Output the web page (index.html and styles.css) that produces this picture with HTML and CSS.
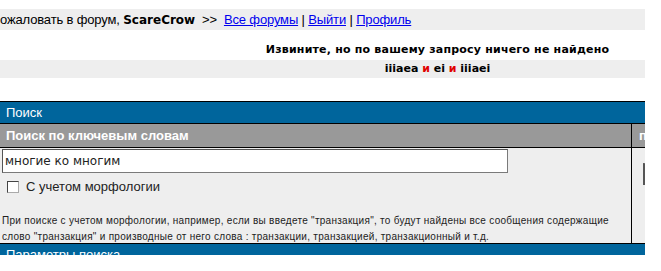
FILE: index.html
```html
<!doctype html>
<html lang="ru">
<head>
  <meta charset="utf-8">
  <title>Поиск</title>
  <link rel="stylesheet" href="styles.css">
</head>
<body>
  <div class="page">
    <div class="topbar">
      ожаловать в форум, <b class="user">ScareCrow</b>&nbsp; &gt;&gt;&nbsp; <a href="#">Все форумы</a> | <a href="#">Выйти</a> | <a href="#">Профиль</a>
    </div>
    <div class="notice">Извините, но по вашему запросу ничего не найдено</div>
    <div class="query">iiiaea <span class="op">и</span> ei <span class="op">и</span> iiiaei</div>

    <div class="search">
      <div class="search-title">Поиск</div>
      <div class="search-grid">
        <div class="cell-head">Поиск по ключевым словам</div>
        <div class="cell-head cell-side">п</div>
        <div class="cell-body">
          <input class="keywords" type="text" value="многие ко многим">
          <label class="morph"><input class="check" type="checkbox"> С учетом морфологии</label>
          <p class="hint">При поиске с учетом морфологии, например, если вы введете "транзакция", то будут найдены все сообщения содержащие<br>слово "транзакция" и производные от него слова : транзакции, транзакцией, транзакционный и т.д.</p>
        </div>
        <div class="cell-body cell-side">
          <span class="side-box"></span>
        </div>
      </div>
      <div class="search-title search-next">Параметры поиска</div>
    </div>
  </div>
</body>
</html>
```

FILE: styles.css
```css
:root {
  --blue: #00659c;
  --head: #999999;
  --light: #eeeeee;
  --black: #000;
}

body {
  margin: 0;
  background: #fff;
  color: #000;
  font: 13px/1.2 "Liberation Sans", Arial, sans-serif;
}

.page {
  width: 645px;
  overflow: hidden;
}

.topbar {
  margin-top: 9px;
  height: 21px;
  line-height: 21px;
  background: var(--light);
  white-space: nowrap;
  font-size: 13px;
  letter-spacing: -0.15px;
}

.topbar .user {
  font-family: "DejaVu Sans", Verdana, sans-serif;
  font-size: 12px;
  letter-spacing: 0;
}

.topbar a {
  color: #0000ee;
}

.notice {
  box-sizing: border-box;
  height: 30px;
  padding: 12px 0 0 230px;
  text-align: center;
  font: bold 11px/16px "DejaVu Sans", Verdana, sans-serif;
  letter-spacing: 0.2px;
}

.query {
  height: 18px;
  padding-left: 230px;
  background: var(--light);
  text-align: center;
  font: bold 11px/18px "DejaVu Sans", Verdana, sans-serif;
}

.query .op {
  color: #e00000;
}

.search {
  margin-top: 23px;
  border-top: 1px solid var(--black);
}

.search-title {
  height: 21px;
  padding-left: 6px;
  line-height: 21px;
  background: var(--blue);
  color: #fff;
  font-size: 13px;
  border-bottom: 1px solid var(--black);
}

.search-grid {
  display: grid;
  grid-template-columns: 632px 1fr;
}

.cell-head {
  height: 23px;
  padding-left: 6px;
  line-height: 23px;
  background: var(--head);
  color: #fff;
  font-weight: bold;
  border-bottom: 1px solid var(--black);
  border-right: 1px solid var(--black);
  white-space: nowrap;
  overflow: hidden;
}

.cell-body {
  height: 95px;
  padding: 1px 0 0 2px;
  background: var(--light);
  border-right: 1px solid var(--black);
  box-sizing: border-box;
}

.cell-side {
  border-right: 0;
  padding-left: 7px;
}

.cell-body.cell-side {
  padding: 15px 0 0 11px;
}

.side-box {
  display: block;
  width: 20px;
  height: 21px;
  background: #fff;
  border-left: 2px solid #555;
  border-top: 1px solid #777;
}

.keywords {
  display: block;
  box-sizing: border-box;
  width: 506px;
  height: 24px;
  margin: 0;
  padding: 0 2px;
  border: 1px solid #7a7a7a;
  border-top-color: #555;
  border-left-color: #555;
  background: #fff;
  color: #222;
  font: 12px "DejaVu Sans", Verdana, sans-serif;
}

.morph {
  display: flex;
  align-items: center;
  gap: 7px;
  height: 27px;
  padding: 0 0 0 5px;
  font-size: 13px;
  color: #222;
}

.check {
  appearance: none;
  box-sizing: border-box;
  width: 12px;
  height: 12px;
  margin: 0;
  background: #fff;
  border: 1px solid #444;
  border-right-color: #aaa;
  border-bottom-color: #aaa;
}

.hint {
  margin: 13px 0 0;
  font-size: 10px;
  line-height: 16px;
  letter-spacing: 0.28px;
  color: #222;
  white-space: nowrap;
}

.search-next {
  height: 11px;
  border-top: 1px solid var(--black);
  border-bottom: 0;
  overflow: hidden;
  line-height: 22px;
}
```
